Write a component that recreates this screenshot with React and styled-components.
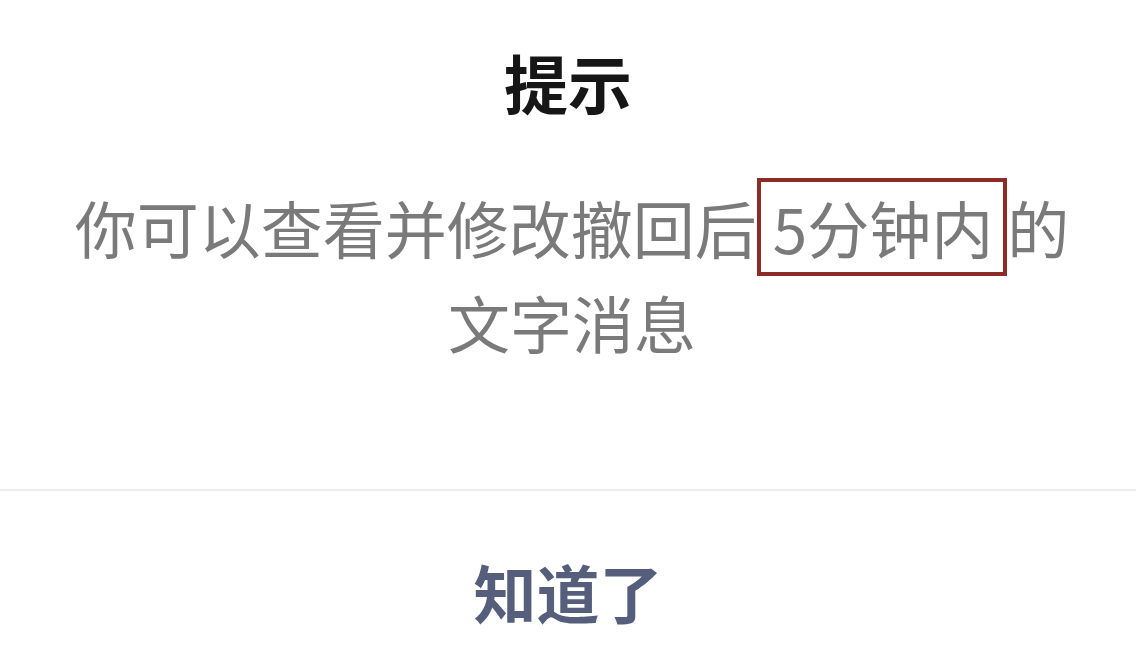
import React from 'react'
import styled, { createGlobalStyle } from 'styled-components'

const GlobalStyle = createGlobalStyle`
	html, body {
		margin: 0;
		padding: 0;
		background: #fff;
	}
	body {
		font-family: "Noto Sans CJK SC", "Noto Sans", sans-serif;
	}
`

const Dialog = styled.div`
	width: 1136px;
	height: 664px;
	display: flex;
	flex-direction: column;
	background: #fff;
	overflow: hidden;
`

const Content = styled.div`
	display: flex;
	flex-direction: column;
	align-items: center;
	padding: 49px 0 119px;
`

const Title = styled.h1`
	margin: 0;
	font-size: 64px;
	line-height: 1;
	font-weight: 700;
	color: #161616;
`

const Message = styled.p`
	margin: 67px 0 0;
	width: 1020px;
	padding-left: 8px;
	font-size: 62px;
	line-height: 95px;
	color: #7a7a7a;
	text-align: center;
`

const Mark = styled.span`
	border: 4px solid #8d2c27;
	padding: 0 10px 0 12px;
`

const Footer = styled.div`
	flex: 1;
	display: flex;
	justify-content: center;
	border-top: 2px solid #ececec;
	padding-top: 68px;
`

const Button = styled.button`
	border: 0;
	background: none;
	padding: 0;
	font-family: inherit;
	font-size: 63px;
	line-height: 1;
	font-weight: 700;
	color: #555f7c;
	height: 63px;
	cursor: pointer;
`

const App = () => {
	return (
		<Dialog>
			<GlobalStyle />
			<Content>
				<Title>提示</Title>
				<Message>
					你可以查看并修改撤回后<Mark>5分钟内</Mark>的文字消息
				</Message>
			</Content>
			<Footer>
				<Button>知道了</Button>
			</Footer>
		</Dialog>
	)
}

export default App
